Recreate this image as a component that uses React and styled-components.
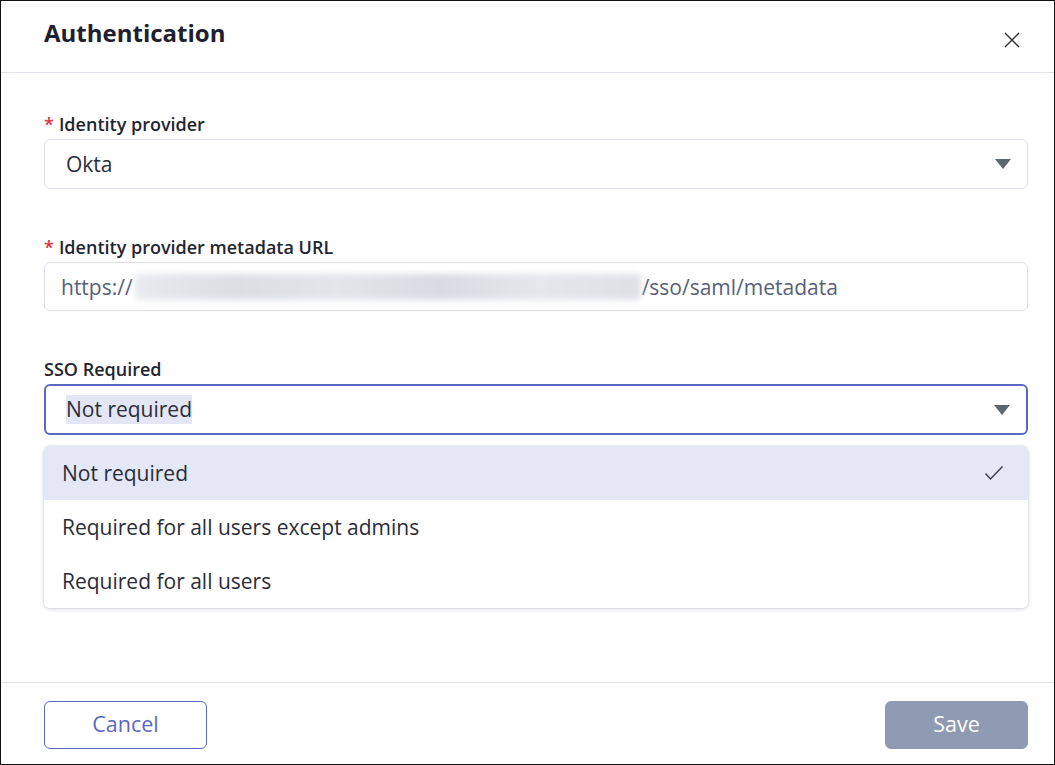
import React from "react";
import styled, { createGlobalStyle } from "styled-components";

const Global = createGlobalStyle`
  html, body { margin: 0; padding: 0; background: #fff; }
  body { font-family: "Open Sans", "Noto Sans", sans-serif; }
  * { box-sizing: border-box; }
`;

const Dialog = styled.div`
  width: 1055px;
  height: 765px;
  border: 1px solid #111;
  display: flex;
  flex-direction: column;
  background: #fff;
  color: #262935;
`;

const Header = styled.header`
  height: 72px;
  flex: none;
  display: flex;
  align-items: center;
  justify-content: space-between;
  padding: 0 32px 0 43px;
  border-bottom: 1px solid #e1e1ea;
`;

const Title = styled.h1`
  margin: 0 0 8px;
  font-size: 24px;
  font-weight: 700;
  color: #1e2030;
`;

const CloseBtn = styled.button`
  border: 0;
  background: none;
  padding: 0;
  width: 20px;
  height: 20px;
  display: flex;
  align-items: center;
  justify-content: center;
  margin-top: 6px;
  cursor: pointer;
`;

const Body = styled.main`
  flex: 1;
  padding: 39px 26px 0 43px;
  display: flex;
  flex-direction: column;
  gap: 46px;
`;

const Field = styled.div`
  position: relative;
  display: flex;
  flex-direction: column;
  gap: 3px;
`;

const Label = styled.label`
  font-size: 18px;
  line-height: 24px;
  font-weight: 600;
  color: #23262f;
`;

const Star = styled.span`
  color: #e0313c;
  margin-right: 5px;
`;

const Control = styled.div`
  height: ${(p) => p.$h}px;
  border: ${(p) => (p.$focused ? "2px solid #5a69c4" : "1px solid #dcdde5")};
  border-radius: 6px;
  display: flex;
  align-items: center;
  justify-content: space-between;
  padding: 0 16px 0 ${(p) => p.$pl}px;
  font-size: 21px;
  color: ${(p) => (p.$muted ? "#56627a" : "#2b2e38")};
  background: #fff;
`;

const Value = styled.span`
  white-space: nowrap;
  display: flex;
  align-items: center;
`;

const Selected = styled.span`
  background: #e3e6f5;
  line-height: 29px;
`;

const Blurred = styled.span`
  display: inline-block;
  width: 506px;
  height: 26px;
  margin: 0 1px 0 2px;
  background: linear-gradient(90deg, #e9eaee 0%, #dcdee4 20%, #e4e5ea 40%, #d9dbe2 60%, #e6e7eb 80%, #dfe0e6 100%);
  filter: blur(3px);
  border-radius: 4px;
`;

const Menu = styled.ul`
  position: absolute;
  top: calc(100% + 11px);
  left: 0;
  right: 0;
  margin: 0;
  padding: 0;
  list-style: none;
  background: #fff;
  border-radius: 6px;
  box-shadow: 0 1px 4px rgba(30, 35, 60, 0.22), 0 0 1px rgba(30, 35, 60, 0.2);
  overflow: hidden;
  z-index: 2;
`;

const Option = styled.li`
  height: 54px;
  display: flex;
  align-items: center;
  justify-content: space-between;
  padding: 0 24px 0 18px;
  font-size: 21px;
  color: #2a2d39;
  background: ${(p) => (p.$active ? "#e4e7f5" : "#fff")};
`;

const Footer = styled.footer`
  flex: none;
  height: 82px;
  border-top: 1px solid #e1e1ea;
  display: flex;
  justify-content: space-between;
  align-items: flex-start;
  padding: 18px 26px 0 43px;
`;

const Button = styled.button`
  height: 48px;
  width: ${(p) => p.$w}px;
  border-radius: 6px;
  padding: 0 0 3px;
  font-family: inherit;
  font-size: 21.5px;
  cursor: pointer;
  border: 1px solid ${(p) => (p.$primary ? "#8f9bb3" : "#5a69c4")};
  background: ${(p) => (p.$primary ? "#8f9bb3" : "#fff")};
  color: ${(p) => (p.$primary ? "#fff" : "#5a69c4")};
`;

const Caret = () => (
  <svg width="16" height="10" viewBox="0 0 16 10">
    <path d="M0 0 H16 L8 10 Z" fill="#5d676f" />
  </svg>
);

const Check = () => (
  <svg width="20" height="16" viewBox="0 0 20 16">
    <path d="M1.5 8.5 L6.5 14 L18.5 1.5" fill="none" stroke="#3a3d48" strokeWidth="1.4" />
  </svg>
);

const CloseIcon = () => (
  <svg width="16" height="16" viewBox="0 0 16 16">
    <path d="M1 1 L15 15 M15 1 L1 15" stroke="#2f323c" strokeWidth="1.4" />
  </svg>
);

export default function App() {
  return (
    <>
      <Global />
      <Dialog>
        <Header>
          <Title>Authentication</Title>
          <CloseBtn aria-label="Close">
            <CloseIcon />
          </CloseBtn>
        </Header>
        <Body>
          <Field>
            <Label>
              <Star>*</Star>Identity provider
            </Label>
            <Control $pl={21} $h={50}>
              <Value>Okta</Value>
              <Caret />
            </Control>
          </Field>
          <Field>
            <Label>
              <Star>*</Star>Identity provider metadata URL
            </Label>
            <Control $muted $pl={16} $h={49}>
              <Value>
                https://
                <Blurred />
                /sso/saml/metadata
              </Value>
            </Control>
          </Field>
          <Field>
            <Label>SSO Required</Label>
            <Control $focused $pl={20} $h={51}>
              <Value>
                <Selected>Not required</Selected>
              </Value>
              <Caret />
            </Control>
            <Menu>
              <Option $active>
                Not required
                <Check />
              </Option>
              <Option>Required for all users except admins</Option>
              <Option>Required for all users</Option>
            </Menu>
          </Field>
        </Body>
        <Footer>
          <Button $w={163}>Cancel</Button>
          <Button $w={143} $primary>
            Save
          </Button>
        </Footer>
      </Dialog>
    </>
  );
}
